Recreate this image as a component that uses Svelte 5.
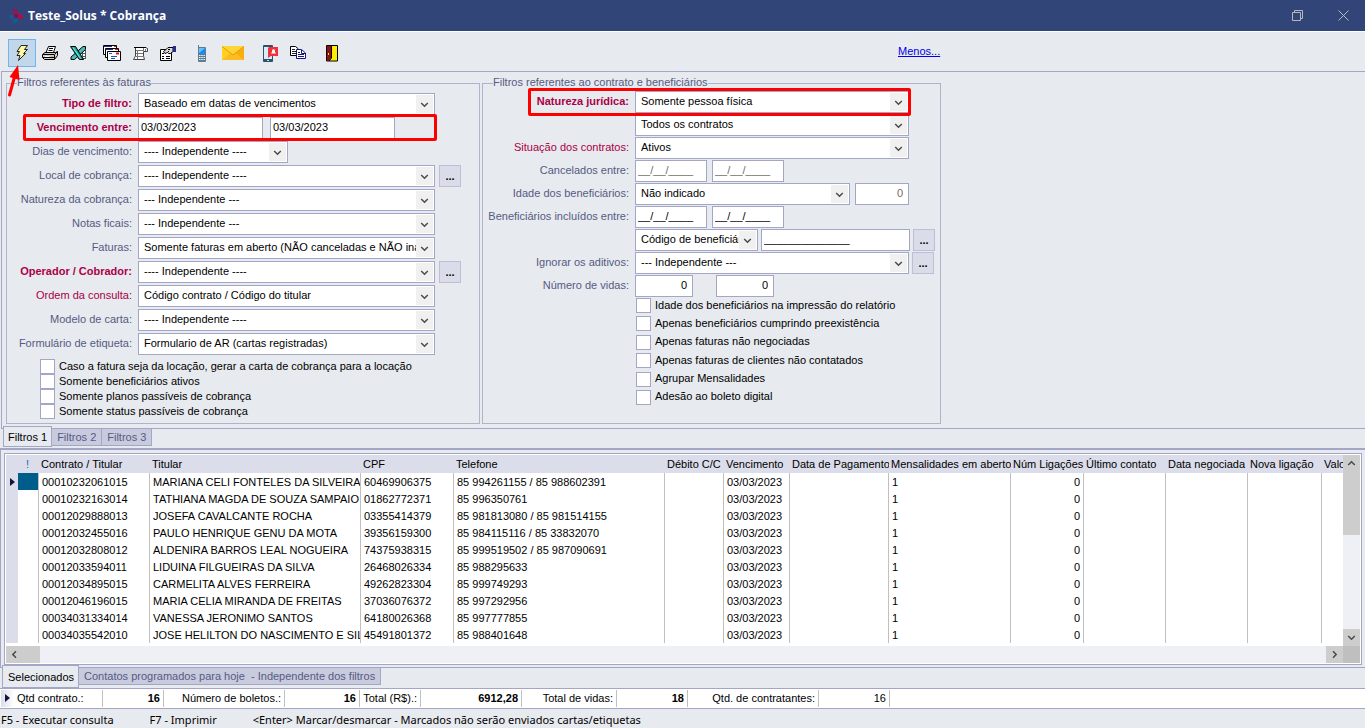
<script lang="ts">
	type Row = {
		id: string;
		label: string;
		tone?: 'strong' | 'required';
		value: string;
		size?: 'short';
		more?: boolean;
	};

	const title = 'Teste_Solus * Cobrança';

	const invoiceRows: Row[] = [
		{ id: 'dias', label: 'Dias de vencimento:', value: '---- Independente ----', size: 'short' },
		{ id: 'local', label: 'Local de cobrança:', value: '---- Independente ----', more: true },
		{ id: 'natureza', label: 'Natureza da cobrança:', value: '--- Independente ---' },
		{ id: 'notas', label: 'Notas ficais:', value: '--- Independente ---' },
		{ id: 'faturas', label: 'Faturas:', value: 'Somente faturas em aberto (NÃO canceladas e NÃO inativas)' },
		{ id: 'operador', label: 'Operador / Cobrador:', tone: 'strong', value: '---- Independente ----', more: true },
		{ id: 'ordem', label: 'Ordem da consulta:', tone: 'required', value: 'Código contrato / Código do titular' },
		{ id: 'modelo', label: 'Modelo de carta:', value: '---- Independente ----' },
		{ id: 'etiqueta', label: 'Formulário de etiqueta:', value: 'Formulario de AR (cartas registradas)' }
	];

	const invoiceChecks = [
		'Caso a fatura seja da locação, gerar a carta de cobrança para a locação',
		'Somente beneficiários ativos',
		'Somente planos passíveis de cobrança',
		'Somente status passíveis de cobrança'
	];

	const contractChecks = [
		'Idade dos beneficiários na impressão do relatório',
		'Apenas beneficiários cumprindo preexistência',
		'Apenas faturas não negociadas',
		'Apenas faturas de clientes não contatados',
		'Agrupar Mensalidades',
		'Adesão ao boleto digital'
	];

	const columns = [
		{ label: '', width: 12 },
		{ label: '!', width: 21 },
		{ label: 'Contrato / Titular', width: 111 },
		{ label: 'Titular', width: 211 },
		{ label: 'CPF', width: 93 },
		{ label: 'Telefone', width: 211 },
		{ label: 'Débito C/C', width: 59 },
		{ label: 'Vencimento', width: 66 },
		{ label: 'Data de Pagamento', width: 99 },
		{ label: 'Mensalidades em aberto', width: 122 },
		{ label: 'Núm Ligações', width: 73 },
		{ label: 'Último contato', width: 82 },
		{ label: 'Data negociada', width: 82 },
		{ label: 'Nova ligação', width: 74 },
		{ label: 'Valor', width: 0 }
	];

	const records = [
		['00010232061015', 'MARIANA CELI FONTELES DA SILVEIRA', '60469906375', '85 994261155 / 85 988602391'],
		['00010232163014', 'TATHIANA MAGDA DE SOUZA SAMPAIO', '01862772371', '85 996350761'],
		['00012029888013', 'JOSEFA CAVALCANTE ROCHA', '03355414379', '85 981813080 / 85 981514155'],
		['00012032455016', 'PAULO HENRIQUE GENU DA MOTA', '39356159300', '85 984115116 / 85 33832070'],
		['00012032808012', 'ALDENIRA BARROS LEAL NOGUEIRA', '74375938315', '85 999519502 / 85 987090691'],
		['00012033594011', 'LIDUINA FILGUEIRAS DA SILVA', '26468026334', '85 988295633'],
		['00012034895015', 'CARMELITA ALVES FERREIRA', '49262823304', '85 999749293'],
		['00012046196015', 'MARIA CELIA MIRANDA DE FREITAS', '37036076372', '85 997292956'],
		['00034031334014', 'VANESSA JERONIMO SANTOS', '64180026368', '85 997777855'],
		['00034035542010', 'JOSE HELILTON DO NASCIMENTO E SILVA', '45491801372', '85 988401648']
	];

	const totals = [
		{ label: 'Qtd contrato.:', value: '16', labelWidth: 89, valueWidth: 61, bold: true },
		{ label: 'Número de boletos.:', value: '16', labelWidth: 121, valueWidth: 75, bold: true },
		{ label: 'Total (R$).:', value: '6912,28', labelWidth: 61, valueWidth: 101, bold: true },
		{ label: 'Total de vidas:', value: '18', labelWidth: 95, valueWidth: 71, bold: true },
		{ label: 'Qtd. de contratantes:', value: '16', labelWidth: 131, valueWidth: 71, bold: false }
	];

	let selected = 0;
</script>

{#snippet chevron(dir: 'up' | 'down' | 'left' | 'right')}
	<svg class="chevron {dir}" width="9" height="9" viewBox="0 0 9 9" aria-hidden="true">
		<path d="M1.2 3L4.5 6.2L7.8 3" fill="none" stroke="#4a4a4a" stroke-width="1.5" />
	</svg>
{/snippet}

{#snippet combo(id: string, value: string, size: string, label?: string)}
	<div class="combo {size}">
		<select {id} aria-label={label}>
			<option>{value}</option>
		</select>
		<span class="combo-arrow">{@render chevron('down')}</span>
	</div>
{/snippet}

{#snippet check(id: string, text: string)}
	<div class="check">
		<input type="checkbox" {id} />
		<label for={id}>{text}</label>
	</div>
{/snippet}

<header class="titlebar">
	<svg class="logo" width="16" height="16" viewBox="0 0 16 16" aria-hidden="true">
		<rect x="5" y="1" width="5" height="8" rx="2" fill="#8c1a55" />
		<rect x="7" y="6" width="8" height="5" rx="2" fill="#a5124c" />
		<rect x="1" y="7" width="7" height="4" rx="2" fill="#1c5590" />
		<rect x="5" y="9" width="5" height="6" rx="2" fill="#145a92" />
		<rect x="6" y="6" width="4" height="4" fill="#6b1c52" />
	</svg>
	<h1>{title}</h1>
	<button class="win" aria-label="Restaurar">
		<svg width="11" height="11" viewBox="0 0 11 11" fill="none" stroke="#b9b9b9">
			<path d="M.5 2.500h8v8h-8zM2.500 2.500v-2h8v8h-2" />
		</svg>
	</button>
	<button class="win" aria-label="Fechar">
		<svg width="11" height="11" viewBox="0 0 11 11" fill="none" stroke="#b9b9b9">
			<path d="M.5 .5L10.500 10.500M10.500 .5L.5 10.500" />
		</svg>
	</button>
</header>

<nav class="toolbar" aria-label="Ferramentas">
	<div class="group">
		<button class="tool active" aria-label="Executar consulta">
			<svg width="14" height="16" viewBox="0 0 14 16">
				<path d="M6 .5H12.500L9.500 4.500H12.500L8.500 8.500H10.500L3.500 15.500L5 10.500H2L4.500 6.500H2Z" fill="#fdf7a0" stroke="#222" />
			</svg>
			<svg class="pointer" width="14" height="34" viewBox="0 0 14 34" aria-hidden="true">
				<path d="M2.500 31L7.500 13" stroke="#f00" stroke-width="3" stroke-linecap="round" />
				<path d="M11 1L2.500 13L12.500 16Z" fill="#f00" />
			</svg>
		</button>
		<button class="tool" aria-label="Imprimir">
			<svg width="16" height="15" viewBox="0 0 16 15" stroke="#000">
				<path d="M4 6.500L6.500 .5H13.500L11.500 6.500Z" fill="#fff" />
				<path d="M7 2.500H11M6.500 4.500H10.500" />
				<path d="M.5 8.500L3 6.500H13.500L15.500 5.500V9.500L12.500 13.500H2.500L.5 11.500Z" fill="#d0d0d0" />
				<path d="M1 8.500H12.500L15 6M12.500 9V13M1 11.500H12" fill="none" />
				<path d="M3 10.500H7" stroke="#fff" />
				<path d="M9 10.500H11" stroke="#e5c100" />
			</svg>
		</button>
		<button class="tool" aria-label="Exportar para Excel">
			<svg width="17" height="15" viewBox="0 0 17 15">
				<path d="M8.500 4.500H15.500V12.500H8.500Z" fill="#fff" />
				<path d="M9 4.500H16M9 7.500H16M9 10.500H16M8 12.500H16M12.500 5V13M15.500 4V13" stroke="#555" />
				<path d="M15.500 .5L13 .5L1 11V13.500H4.500L15.500 3.500Z" fill="#49bdb3" stroke="#000" />
				<path d="M.5 .5H5.500L13.500 13.500H9.500Z" fill="#18a4a0" stroke="#000" />
				<path d="M3 1.500L10.500 12.500" stroke="#7ff0ea" />
			</svg>
		</button>
	</div>
	<div class="group">
		<button class="tool" aria-label="Cartas">
			<svg width="18" height="16" viewBox="0 0 18 16" stroke="#000">
				<path d="M.5 .5H13.500V9.500H.5Z" fill="#fff" />
				<path d="M1 1.500H9" stroke="#24308c" />
				<path d="M11 1.500H13" stroke="#c22" />
				<path d="M2.500 3.500H15.500V12.500H2.500Z" fill="#fff" />
				<path d="M3 4.500H10" stroke="#24308c" />
				<path d="M12 4.500H15" stroke="#c22" />
				<path d="M4.500 6.500H17.500V15.500H4.500Z" fill="#fff" />
				<path d="M13 8.500H16" stroke="#d11" stroke-width="2" />
				<path d="M6 8.500H9M8 11.500H14M8 13.500H12" stroke="#2450c0" />
			</svg>
		</button>
		<button class="tool" aria-label="Relatório">
			<svg width="15" height="15" viewBox="0 0 15 15" stroke="#444">
				<path d="M2.500 1.500H12.500L14.500 2.500V5.500H10.500V10L11.500 13.500H.5L2.500 10Z" fill="#fff" />
				<path d="M1 1.500H13" stroke="#000" />
				<path d="M3 4.500H10M3 7.500H10M2 10.500H11M10.500 2V6M4.500 5V13M12.500 3V5" fill="none" stroke="#777" />
			</svg>
		</button>
		<button class="tool" aria-label="Propriedades">
			<svg width="16" height="15" viewBox="0 0 16 15" stroke="#000">
				<path d="M.5 3.500H11.500V14.500H.5Z" fill="#fff" />
				<path d="M2 7.500H4M2 10.500H4M2 12.500H4M6 10.500H10M6 12.500H10" fill="none" />
				<path d="M3.500 5.500L6 3.500L8 1.500H13V5.500L10.500 7.500H8.500L7.500 6.500L5 7.500Z" fill="#d9d9d9" />
				<path d="M8 3.500H10M8 5.500H9" fill="none" />
				<path d="M13 0H16V6H13Z" fill="#24308c" stroke="none" />
			</svg>
		</button>
	</div>
	<div class="group">
		<button class="tool" aria-label="SMS">
			<svg width="10" height="17" viewBox="0 0 10 17">
				<path d="M1 0H2V2H8Q9 2 9 3V16Q9 17 8 17H2Q1 17 1 16Z" fill="#5d7c94" />
				<rect x="2" y="3" width="6" height="6" fill="#1b8df0" />
				<path d="M2 3H8L2 8Z" fill="#6cc0fc" />
				<path d="M2 10.500H8M2 12.500H8M2 14.500H8" stroke="#f2f5f8" stroke-dasharray="1.500 .7" />
			</svg>
		</button>
		<button class="tool wide" aria-label="Enviar e-mail">
			<svg width="22" height="14" viewBox="0 0 22 14">
				<rect width="22" height="14" fill="#fdbc22" />
				<path d="M0 0L8 7L0 14Z" fill="#ffd21f" />
				<path d="M22 0L14 7L22 14Z" fill="#f8ad10" />
				<path d="M0 0H22L12 8Q11 9 10 8Z" fill="#ffd536" />
				<path d="M0 .5L10 8.300Q11 9 12 8.300L22 .5" fill="none" stroke="#ef9a05" />
			</svg>
		</button>
	</div>
	<div class="group">
		<button class="tool" aria-label="Notificação">
			<svg width="16" height="17" viewBox="0 0 16 17">
				<rect x="1" y="0" width="10" height="17" rx="1" fill="#31506b" />
				<rect x="2" y="2" width="8" height="12" fill="#d7ecf8" />
				<path d="M5 15.500H7" stroke="#c9d6df" />
				<path d="M7 2H16V11H9L6 13V3Z" fill="#f2303a" />
				<path d="M9 8.500H14L13 7V5.500Q11.500 2.500 10 5.500V7Z" fill="#fff" />
			</svg>
		</button>
		<button class="tool" aria-label="Copiar">
			<svg width="16" height="14" viewBox="0 0 16 14">
				<path d="M.5 .5H5.500L8.500 3V9.500H.5Z" fill="#fff" stroke="#000" />
				<path d="M2 3.500H5M2 5.500H6M2 7.500H6" stroke="#222" />
				<path d="M6.500 3.500H11.500L15.500 7V12.500H6.500Z" fill="#fff" stroke="#14187a" />
				<path d="M11.500 4V7.500H15M8 6.500H10M8 8.500H14M8 10.500H14" fill="none" stroke="#14187a" />
			</svg>
		</button>
	</div>
	<div class="group">
		<button class="tool" aria-label="Sair">
			<svg width="12" height="17" viewBox="0 0 12 17">
				<path d="M.5 .5H11.500V16H.5Z" fill="#ffee00" stroke="#000" />
				<path d="M1 1H5V13L3 16H1Z" fill="#8e0f14" />
				<path d="M5.500 1V13L3 16" fill="none" stroke="#000" />
				<path d="M2.500 8V10" stroke="#ffee00" />
			</svg>
		</button>
	</div>
	<a class="less" href="#menos">Menos...</a>
</nav>

<main>
	<section class="filters">
		<fieldset class="invoices">
			<legend>Filtros referentes às faturas</legend>
			<div class="row">
				<label class="strong" for="tipo">Tipo de filtro:</label>
				{@render combo('tipo', 'Baseado em datas de vencimentos', 'long')}
			</div>
			<div class="row marked">
				<label class="strong" for="venc-de">Vencimento entre:</label>
				<input class="box date-long" id="venc-de" value="03/03/2023" />
				<input class="box date-long" aria-label="Vencimento até" value="03/03/2023" />
			</div>
			{#each invoiceRows as row}
				<div class="row">
					<label class={row.tone} for={row.id}>{row.label}</label>
					{@render combo(row.id, row.value, row.size ?? 'long')}
					{#if row.more}
						<button class="more" aria-label="Pesquisar {row.label}">...</button>
					{/if}
				</div>
			{/each}
			<div class="checks">
				{#each invoiceChecks as text, i}
					{@render check(`fatura-${i}`, text)}
				{/each}
			</div>
		</fieldset>

		<fieldset class="contracts">
			<legend>Filtros referentes ao contrato e beneficiários</legend>
			<div class="row marked">
				<label class="strong" for="juridica">Natureza jurídica:</label>
				{@render combo('juridica', 'Somente pessoa física', 'full')}
			</div>
			<div class="row">
				<span class="blank"></span>
				{@render combo('contratos', 'Todos os contratos', 'full', 'Contratos')}
			</div>
			<div class="row">
				<label class="required" for="situacao">Situação dos contratos:</label>
				{@render combo('situacao', 'Ativos', 'full')}
			</div>
			<div class="row">
				<label for="cancelados">Cancelados entre:</label>
				<input class="box date muted" id="cancelados" value="__/__/____" />
				<input class="box date muted" aria-label="Cancelados até" value="__/__/____" />
			</div>
			<div class="row">
				<label for="idade">Idade dos beneficiários:</label>
				{@render combo('idade', 'Não indicado', 'age')}
				<input class="box number muted" aria-label="Idade" value="0" />
			</div>
			<div class="row">
				<label for="incluidos">Beneficiários incluídos entre:</label>
				<input class="box date" id="incluidos" value="__/__/____" />
				<input class="box date" aria-label="Incluídos até" value="__/__/____" />
			</div>
			<div class="row tight">
				<span class="blank"></span>
				{@render combo('campo', 'Código de beneficiário', 'code', 'Campo de pesquisa')}
				<input class="box code-value" aria-label="Código" value="______________" />
				<button class="more" aria-label="Pesquisar beneficiário">...</button>
			</div>
			<div class="row tight">
				<label for="aditivos">Ignorar os aditivos:</label>
				{@render combo('aditivos', '--- Independente ---', 'full')}
				<button class="more" aria-label="Pesquisar aditivos">...</button>
			</div>
			<div class="row lives">
				<label for="vidas">Número de vidas:</label>
				<input class="box number" id="vidas" value="0" />
				<input class="box number" aria-label="Número máximo de vidas" value="0" />
			</div>
			<div class="checks">
				{#each contractChecks as text, i}
					{@render check(`contrato-${i}`, text)}
				{/each}
			</div>
		</fieldset>
	</section>

	<div class="tabs" role="tablist">
		<button class="tab current" role="tab" aria-selected="true">Filtros 1</button>
		<button class="tab" role="tab" aria-selected="false">Filtros 2</button>
		<button class="tab" role="tab" aria-selected="false">Filtros 3</button>
	</div>

	<section class="results">
		<div class="grid">
			<div class="viewport">
				<table>
					<colgroup>
						{#each columns as col}
							<col style={col.width ? `width: ${col.width}px` : undefined} />
						{/each}
					</colgroup>
					<thead>
						<tr>
							{#each columns as col}
								<th class:flag={col.label === '!'}>{col.label}</th>
							{/each}
						</tr>
					</thead>
					<tbody>
						{#each records as record, i}
							<tr onclick={() => (selected = i)}>
								<td class="indicator">
									{#if i === selected}<span class="caret"></span>{/if}
								</td>
								<td class:picked={i === selected}></td>
								{#each record as cell}
									<td>{cell}</td>
								{/each}
								<td></td>
								<td>03/03/2023</td>
								<td></td>
								<td>1</td>
								<td class="right">0</td>
								<td></td>
								<td></td>
								<td></td>
								<td></td>
							</tr>
						{/each}
					</tbody>
				</table>
			</div>
			<div class="vbar">
				<button aria-label="Rolar para cima">{@render chevron('up')}</button>
				<div class="vthumb"></div>
				<button class="end" aria-label="Rolar para baixo">{@render chevron('down')}</button>
			</div>
			<div class="hbar">
				<button aria-label="Rolar para a esquerda">{@render chevron('left')}</button>
				<div class="hthumb"></div>
				<button class="end" aria-label="Rolar para a direita">{@render chevron('right')}</button>
			</div>
			<div class="corner"></div>
		</div>
	</section>

	<div class="tabs lower" role="tablist">
		<button class="tab current" role="tab" aria-selected="true">Selecionados</button>
		<button class="tab" role="tab" aria-selected="false">Contatos programados para hoje &nbsp;- Independente dos filtros</button>
	</div>

	<dl class="totals">
		<div class="mark"><span class="caret"></span></div>
		{#each totals as total}
			<dt style="width: {total.labelWidth}px">{total.label}</dt>
			<dd class:bold={total.bold} style="width: {total.valueWidth}px">{total.value}</dd>
		{/each}
	</dl>
</main>

<footer>
	<span>F5 - Executar consulta</span>
	<span>F7 - Imprimir</span>
	<span>&lt;Enter&gt; Marcar/desmarcar - Marcados não serão enviados cartas/etiquetas</span>
</footer>

<style>
	:global(body) {
		margin: 0;
		background: #e7eaee;
		color: #000;
		font: 11px/12px 'Liberation Sans', Arial, sans-serif;
		overflow: hidden;
	}

	:global(#app) {
		--line: #a3a6c5;
		--soft-line: #b0b2ce;
		--label: #565a84;
		--wine: #ab0047;
	}

	button,
	input,
	select {
		box-sizing: border-box;
		margin: 0;
		font: inherit;
		color: inherit;
		border-radius: 0;
	}

	button {
		display: flex;
		align-items: center;
		justify-content: center;
		padding: 0;
		border: none;
		background: none;
	}

	.titlebar {
		display: flex;
		align-items: center;
		height: 31px;
		padding: 0 10px 0 8px;
		background: #324578;
		border-bottom: 1px solid #fff;
	}

	.logo {
		margin-right: 4px;
	}

	h1 {
		flex: 1;
		margin: 0;
		color: #fff;
		font: bold 12px/16px 'Open Sans', 'Segoe UI', sans-serif;
	}

	.win {
		width: 24px;
		height: 24px;
		margin-left: 22px;
	}

	.toolbar {
		display: flex;
		align-items: flex-start;
		gap: 6px;
		height: 32px;
		padding: 7px 0 0 8px;
	}

	.group {
		display: flex;
		align-items: center;
	}

	.tool {
		position: relative;
		width: 28px;
		height: 28px;
	}

	.tool.wide {
		width: 34px;
	}

	.tool.active {
		background: #c3d7ea;
		border: 1px solid #6bb9ec;
	}

	.pointer {
		position: absolute;
		left: -2px;
		top: 24px;
		z-index: 2;
	}

	.less {
		margin-left: 546px;
		line-height: 24px;
		color: #0000e6;
	}

	.filters {
		display: flex;
		align-items: stretch;
		gap: 2px;
		margin-left: 1px;
		padding: 4px 0 4px 4px;
		border: solid var(--line);
		border-width: 1px 0 1px 1px;
	}

	fieldset {
		box-sizing: border-box;
		margin: 0;
		padding: 0;
		border: 1px solid var(--soft-line);
		color: #000;
	}

	legend {
		margin-left: 10px;
		padding: 0 0 3px;
		color: var(--label);
	}

	.invoices {
		width: 474px;
	}

	.invoices .row:first-of-type {
		margin-top: 2px;
	}

	.contracts {
		width: 459px;
	}

	.row {
		position: relative;
		display: flex;
		align-items: center;
		gap: 4px;
		margin-bottom: 2px;
	}

	.row label,
	.blank {
		width: 125px;
		margin-right: 2px;
		padding-bottom: 2px;
		text-align: right;
		white-space: nowrap;
		color: var(--label);
	}

	.contracts .row {
		gap: 5px;
		margin-bottom: 1px;
	}

	.contracts .row label,
	.contracts .blank {
		width: 146px;
		margin-right: 1px;
	}

	.row label.strong,
	.row label.required {
		color: var(--wine);
	}

	.row label.strong {
		font-weight: bold;
	}

	.row.marked::after {
		content: '';
		position: absolute;
		inset: -3px 42px -2px 16px;
		border: 3px solid #f00;
		border-radius: 2px;
		pointer-events: none;
		z-index: 1;
	}

	.contracts .row.marked::after {
		inset: -3px 29px -3px 45px;
	}

	.combo {
		position: relative;
		width: 297px;
		height: 22px;
	}

	.combo.short {
		width: 150px;
	}

	.combo.full {
		width: 274px;
	}

	.combo.age {
		width: 215px;
	}

	.combo.code {
		width: 123px;
	}

	select {
		appearance: none;
		width: 100%;
		height: 22px;
		padding: 0 18px 2px 5px;
		border: 1px solid var(--line);
		background: #fff;
		color: #000;
		display: block;
		overflow: hidden;
	}

	.combo-arrow {
		position: absolute;
		top: 2px;
		right: 2px;
		display: flex;
		align-items: center;
		justify-content: center;
		width: 17px;
		height: 18px;
		background: #f0f0f0;
		pointer-events: none;
	}

	.chevron.up {
		transform: rotate(180deg);
	}

	.chevron.left {
		transform: rotate(90deg);
	}

	.chevron.right {
		transform: rotate(-90deg);
	}

	.box {
		height: 22px;
		padding: 0 2px 2px;
		border: 1px solid var(--line);
		background: #fff;
		color: #000;
	}

	.box.muted {
		color: #6d6d6d;
	}

	.box.number {
		width: 54px;
		padding-right: 5px;
		text-align: right;
	}

	.date-long {
		width: 125px;
	}

	.date-long + .date-long {
		margin-left: 3px;
	}

	.date {
		width: 72px;
	}

	.code-value {
		width: 149px;
	}

	.contracts .tight {
		gap: 3px;
	}

	.contracts .tight label,
	.contracts .tight .blank {
		margin-right: 3px;
	}

	.lives .box.number {
		width: 58px;
	}

	.lives .box.number + .box.number {
		margin-left: 18px;
	}

	.more {
		width: 22px;
		height: 22px;
		border: 1px solid #bcbfd6;
		background: #dadce9;
		font-weight: bold;
	}

	.checks {
		display: flex;
		flex-direction: column;
		margin: 4px 0 4px 33px;
	}

	.contracts .checks {
		justify-content: space-between;
		height: 107px;
		margin: 0 0 18px 153px;
	}

	.check {
		display: flex;
		align-items: center;
		gap: 4px;
		height: 15px;
	}

	.check label {
		padding-bottom: 2px;
	}

	.check input {
		appearance: none;
		width: 15px;
		height: 15px;
		border: 1px solid var(--line);
		background: #fff;
	}

	.tabs {
		display: flex;
		align-items: flex-start;
		height: 19px;
		padding-left: 3px;
	}

	.tab {
		height: 18px;
		padding: 0 5px 1px;
		margin-top: -1px;
		border: 1px solid var(--line);
		border-left-width: 0;
		background: #c8cadd;
		color: var(--label);
		white-space: nowrap;
	}

	.tab.current {
		position: relative;
		height: 21px;
		margin-top: -3px;
		padding: 0 4px;
		border-left-width: 1px;
		background: #e7eaee;
		color: #000;
	}

	.results {
		padding: 3px 3px 2px;
		border: solid var(--line);
		border-width: 2px 0 1px 1px;
	}

	.grid {
		display: grid;
		grid-template-columns: minmax(0, 1fr) 17px;
		padding: 1px;
		border: 1px solid var(--line);
		background: #fff;
	}

	.viewport {
		overflow: hidden;
		padding-bottom: 3px;
	}

	table {
		width: 100%;
		table-layout: fixed;
		border-collapse: separate;
		border-spacing: 0;
	}

	th,
	td {
		box-sizing: border-box;
		padding: 0 0 0 3px;
		overflow: hidden;
		white-space: nowrap;
		text-align: left;
		font-weight: normal;
	}

	th {
		height: 18px;
		padding: 0 0 0 2px;
		background: #dbddea;
	}

	th.flag {
		padding-left: 8px;
		color: #2a62b8;
	}

	td {
		height: 17px;
		border-right: 1px solid #c0c0c0;
	}

	td:last-child,
	td.indicator {
		border-right: none;
	}

	td.indicator {
		padding: 0 0 0 4px;
		background: #dbddea;
	}

	td.picked {
		background: #005c8a;
		background-clip: padding-box;
	}

	td.right {
		padding-right: 3px;
		text-align: right;
	}

	.caret {
		display: block;
		width: 0;
		height: 0;
		border: solid transparent;
		border-width: 4px 0 4px 5px;
		border-left-color: #14143c;
	}

	.vbar,
	.hbar {
		display: flex;
		background: #eff0f5;
	}

	.vbar {
		flex-direction: column;
	}

	.vbar button,
	.hbar button {
		width: 17px;
		height: 17px;
		background: #cdcdcd;
	}

	.vbar .end {
		margin-top: auto;
	}

	.hbar .end {
		margin-left: auto;
	}

	.vthumb {
		height: 63px;
		background: #cdcdcd;
	}

	.hthumb {
		width: 17px;
		background: #cdcdcd;
	}

	.corner {
		background: #bfbfbf;
	}

	.lower {
		height: 20px;
		padding-left: 2px;
	}

	.lower .tab.current {
		height: 23px;
		padding: 0 4px 0 5px;
	}

	.totals {
		display: flex;
		align-items: center;
		height: 19px;
		margin: 0;
		border: solid var(--line);
		border-width: 1px 0;
		background: #fff;
	}

	.mark {
		box-sizing: border-box;
		width: 13px;
		height: 17px;
		margin-left: 1px;
		padding: 4px 0 0 4px;
		background: linear-gradient(90deg, #dbddea, #fff);
	}

	dt,
	dd {
		box-sizing: border-box;
		height: 17px;
		margin: 0;
		padding-right: 3px;
		border-right: 1px solid #c0c0c0;
		line-height: 17px;
		text-align: right;
		white-space: nowrap;
	}

	.mark + dt {
		padding-left: 3px;
		text-align: left;
	}

	dd.bold {
		font-weight: bold;
	}

	footer {
		display: flex;
		gap: 36px;
		padding: 3px 0 0 1px;
		font: 11px/16px 'Noto Sans', 'Segoe UI', sans-serif;
	}
</style>
